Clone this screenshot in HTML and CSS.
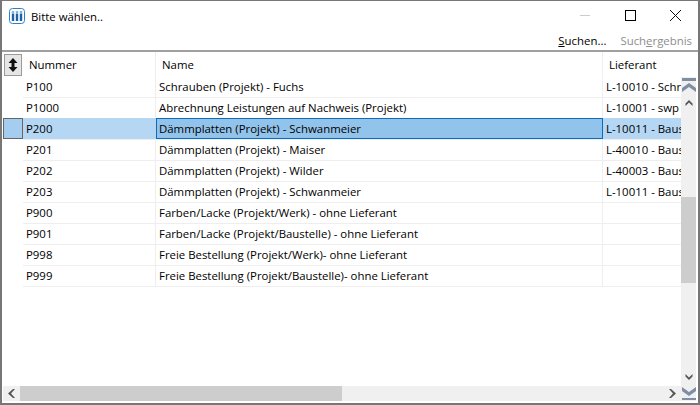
FILE: index.html
```html
<!DOCTYPE html>
<html lang="de">
<head>
<meta charset="utf-8">
<title>Bitte wählen..</title>
<link rel="stylesheet" href="styles.css">
</head>
<body>
<div class="window">
  <div class="titlebar">
    <svg class="appicon" width="16" height="16" viewBox="0 0 16 16"><rect x=".5" y=".5" width="15" height="15" rx="3" fill="#fff" stroke="#2b82cc"/><path d="M4 3v2M8 3v2M12 3v2" stroke="#7fb2de" stroke-width="2.400"/><path d="M4 5.500v7.500M8 5.500v7.500M12 5.500v7.500" stroke="#1c62a8" stroke-width="2.400"/></svg>
    <span class="title">Bitte wählen..</span>
    <div class="controls">
      <svg class="ctl" width="46" height="30" viewBox="0 0 46 30"><path d="M19 14.500h10" stroke="#ccc"/></svg>
      <svg class="ctl" width="46" height="30" viewBox="0 0 46 30"><rect x="18.500" y="9.500" width="10" height="10" fill="none" stroke="#000"/></svg>
      <svg class="ctl" width="46" height="30" viewBox="0 0 46 30"><path d="M17 9l11 11M28 9l-11 11" stroke="#111"/></svg>
    </div>
  </div>
  <div class="toolbar">
    <span class="tool"><u>S</u>uchen...</span>
    <span class="tool off">Such<u>e</u>rgebnis</span>
  </div>
  <div class="grid">
    <div class="row head">
      <div class="sel"><span class="sortbtn"><svg width="10" height="14" viewBox="0 0 10 14"><path d="M5 0l4.500 5h-9zM5 14l-4.500-5h9z" fill="#111"/><rect x="3.500" y="4" width="3" height="6" fill="#111"/></svg></span></div>
      <div class="c1">Nummer</div><div class="c2">Name</div><div class="c3">Lieferant</div>
    </div>
    <div class="content">
      <div class="row"><div class="sel"></div><div class="c1">P100</div><div class="c2">Schrauben (Projekt) - Fuchs</div><div class="c3">L-10010 - Schrauben</div></div>
      <div class="row"><div class="sel"></div><div class="c1">P1000</div><div class="c2">Abrechnung Leistungen auf Nachweis (Projekt)</div><div class="c3">L-10001 - swp</div></div>
      <div class="row active"><div class="sel"></div><div class="c1">P200</div><div class="c2">Dämmplatten (Projekt) - Schwanmeier</div><div class="c3">L-10011 - Baustoffe</div></div>
      <div class="row"><div class="sel"></div><div class="c1">P201</div><div class="c2">Dämmplatten (Projekt) - Maiser</div><div class="c3">L-40010 - Baustoffe</div></div>
      <div class="row"><div class="sel"></div><div class="c1">P202</div><div class="c2">Dämmplatten (Projekt) - Wilder</div><div class="c3">L-40003 - Baustoffe</div></div>
      <div class="row"><div class="sel"></div><div class="c1">P203</div><div class="c2">Dämmplatten (Projekt) - Schwanmeier</div><div class="c3">L-10011 - Baustoffe</div></div>
      <div class="row"><div class="sel"></div><div class="c1">P900</div><div class="c2">Farben/Lacke (Projekt/Werk) - ohne Lieferant</div><div class="c3"></div></div>
      <div class="row"><div class="sel"></div><div class="c1">P901</div><div class="c2">Farben/Lacke (Projekt/Baustelle) - ohne Lieferant</div><div class="c3"></div></div>
      <div class="row"><div class="sel"></div><div class="c1">P998</div><div class="c2">Freie Bestellung (Projekt/Werk)- ohne Lieferant</div><div class="c3"></div></div>
      <div class="row"><div class="sel"></div><div class="c1">P999</div><div class="c2">Freie Bestellung (Projekt/Baustelle)- ohne Lieferant</div><div class="c3"></div></div>
    </div>
    <div class="vbar">
      <svg class="arrow" width="15" height="30" viewBox="0 0 15 30"><path d="M1 2.500h14" stroke="#7f8ea3" stroke-width="3"/><path d="M8 6l7 5v4l-7-5-7 5v-4z" fill="#7f8ea3"/><path d="M8 23l3.500 3.500v2.500l-3.500-3.500-3.500 3.500v-2.500z" fill="#555"/></svg>
      <div class="vtrack"><div class="vthumb"></div></div>
      <svg class="arrow" width="15" height="29" viewBox="0 0 15 29"><path d="M8 6l3.500-3.500v-2.500l-3.500 3.500-3.500-3.500v2.500z" transform="translate(0 2)" fill="#555"/><path d="M8 20l7-5v4l-7 5-7-5v-4z" fill="#7f8ea3"/><path d="M1 27h14" stroke="#7f8ea3" stroke-width="2"/></svg>
    </div>
    <div class="hbar">
      <svg class="harrow" width="17" height="15" viewBox="0 0 17 15"><path d="M5 7.500l5-4.500h2l-4 4.500 4 4.500h-2z" fill="#555"/></svg>
      <div class="htrack"><div class="hthumb"></div></div>
      <svg class="harrow" width="17" height="15" viewBox="0 0 17 15"><path d="M12 7.500l-5-4.500h-2l4 4.500-4 4.500h2z" fill="#555"/></svg>
    </div>
  </div>
</div>
</body>
</html>
```
FILE: styles.css
```css
* { box-sizing: border-box; }
html, body { margin: 0; padding: 0; }
body { width: 700px; height: 405px; overflow: hidden; background: #fff; font-family: "Open Sans", "Noto Sans", sans-serif; font-size: 11.400px; color: #000; }
.window { width: 700px; height: 405px; display: flex; flex-direction: column; border: 2px solid #777; border-top-width: 1px; }
.titlebar { height: 30px; display: flex; align-items: center; padding-left: 7px; flex: none; }
.appicon { flex: none; }
.title { margin-left: 6px; }
.controls { margin-left: auto; display: flex; margin-right: -1px; }
.ctl { display: block; }
.toolbar { height: 19px; flex: none; display: flex; justify-content: flex-end; gap: 14px; padding-right: 6px; align-items: center; }
.tool.off { color: #8d8d8d; }
.grid { flex: 1; min-height: 0; border-top: 2px solid #a0a0a0; padding: 0 1px 2px 1px; display: grid; grid-template-columns: 678px 15px; grid-template-rows: 24px 1fr 15px; }
.head { grid-column: 1 / 3; height: 24px; }
.content { overflow: hidden; }
.row { display: flex; height: 21px; align-items: center; }
.sel { width: 20px; height: 100%; flex: none; }
.sortbtn { display: flex; width: 18px; height: 22px; margin: 2px 0 0 1px; align-items: center; justify-content: center; background: #e6e6e6; border: 1px solid #9a9a9a; }
.c1, .c2, .c3 { height: 100%; display: flex; align-items: center; white-space: nowrap; overflow: hidden; padding: 0 0 2px 3px; border-right: 1px solid #eee; border-top: 1px solid #eee; }
.c1 { width: 133px; }
.c2 { width: 447px; }
.c3 { flex: 1; border-right: 0; }
.content .row:first-child > div { border-top-color: transparent; }
.content .row:last-child { height: 22px; }
.content .row:last-child .c1, .content .row:last-child .c2, .content .row:last-child .c3 { border-bottom: 1px solid #eee; padding-bottom: 1px; }
.row.head { height: 24px; }
.head .c1, .head .c2, .head .c3 { border-top: 0; padding: 1px 0 0 6px; }
.active .sel { background: #a5cdf0; border: 1px solid #666; }
.active .c1, .active .c3 { background: #b5d7f3; border-color: #b5d7f3; }
.active .c2 { background: #92c3ea; border: 1px solid #0a6cc0; padding: 0 0 1px 2px; }
.vbar { grid-column: 2; grid-row: 2 / 4; margin-top: 1px; display: flex; flex-direction: column; background: #f0f0f0; }
.arrow, .harrow { display: block; flex: none; }
.vtrack { flex: 1; display: flex; flex-direction: column; padding-top: 90px; }
.vthumb { height: 86px; background: #cdcdcd; }
.hbar { grid-column: 1; grid-row: 3; display: flex; background: #f0f0f0; }
.htrack { flex: 1; }
.hthumb { width: 322px; height: 100%; background: #cdcdcd; }
```
